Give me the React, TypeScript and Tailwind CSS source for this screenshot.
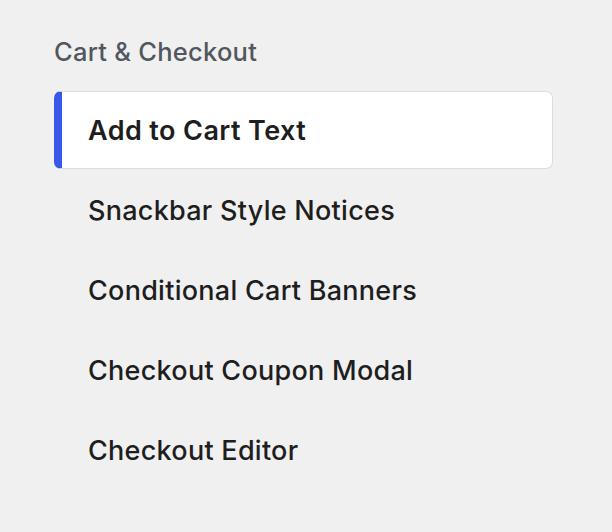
import React from 'react';

const items = [
  'Add to Cart Text',
  'Snackbar Style Notices',
  'Conditional Cart Banners',
  'Checkout Coupon Modal',
  'Checkout Editor',
];

const App: React.FC = () => {
  const active = 0;

  return (
    <div className="min-h-[532px] w-[612px] bg-[#f0f0f0] pl-[54px] pr-[59px] pt-[35px] font-['Inter',sans-serif]">
      <h2 className="text-[25.5px] leading-[34px] font-medium tracking-[0.01em] text-[#50575e]">Cart &amp; Checkout</h2>
      <nav className="mt-[22px] flex flex-col gap-[2px]">
        {items.map((label, i) => (
          <a
            key={label}
            href="#"
            className={
              i === active
                ? 'flex h-[78px] items-center rounded-[7px] border border-l-[8px] border-[#dcdcde] border-l-[#3858e9] bg-white pl-[26px] pt-[2px] text-[27px] font-semibold tracking-[0.015em] text-[#1e1e1e]'
                : 'flex h-[78px] items-center pl-[34px] pt-[2px] text-[27px] font-medium tracking-[0.01em] text-[#1e1e1e]'
            }
          >
            {label}
          </a>
        ))}
      </nav>
    </div>
  );
};

export default App;
